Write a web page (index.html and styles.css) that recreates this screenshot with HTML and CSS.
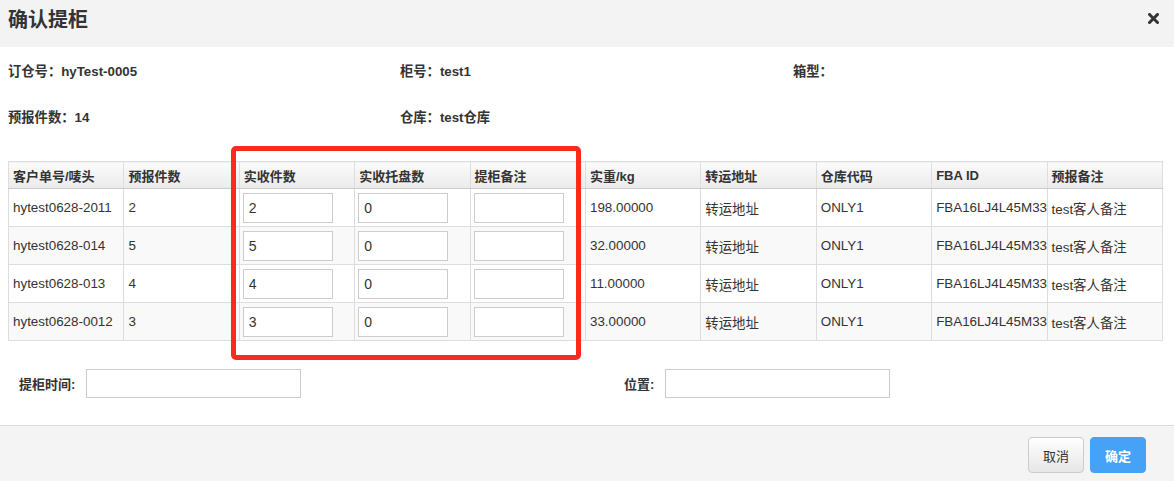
FILE: index.html
```html
<!DOCTYPE html>
<html lang="zh-CN">
<head>
<meta charset="utf-8">
<title>确认提柜</title>
<link rel="stylesheet" href="styles.css">
</head>
<body>
<div class="dialog">
  <div class="dlg-head">
    <h3 class="dlg-title">确认提柜</h3>
    <span class="dlg-close" aria-label="关闭">
      <svg width="11" height="11" viewBox="0 0 11 11"><path d="M1.5 1.5 L9.5 9.5 M9.5 1.5 L1.5 9.5" stroke="#333" stroke-width="3" stroke-linecap="square"/></svg>
    </span>
  </div>

  <div class="info">
    <div class="info-item">订仓号：hyTest-0005</div>
    <div class="info-item">柜号：test1</div>
    <div class="info-item">箱型：</div>
    <div class="info-item">预报件数：14</div>
    <div class="info-item">仓库：test仓库</div>
    <div class="info-item"></div>
  </div>

  <table class="grid">
    <thead>
      <tr>
        <th>客户单号/唛头</th>
        <th>预报件数</th>
        <th>实收件数</th>
        <th>实收托盘数</th>
        <th>提柜备注</th>
        <th>实重/kg</th>
        <th>转运地址</th>
        <th>仓库代码</th>
        <th>FBA ID</th>
        <th>预报备注</th>
      </tr>
    </thead>
    <tbody>
      <tr>
        <td>hytest0628-2011</td><td>2</td>
        <td><input class="cell-input" value="2"></td>
        <td><input class="cell-input" value="0"></td>
        <td><input class="cell-input" value=""></td>
        <td>198.00000</td><td>转运地址</td><td>ONLY1</td><td>FBA16LJ4L45M33</td><td>test客人备注</td>
      </tr>
      <tr>
        <td>hytest0628-014</td><td>5</td>
        <td><input class="cell-input" value="5"></td>
        <td><input class="cell-input" value="0"></td>
        <td><input class="cell-input" value=""></td>
        <td>32.00000</td><td>转运地址</td><td>ONLY1</td><td>FBA16LJ4L45M33</td><td>test客人备注</td>
      </tr>
      <tr>
        <td>hytest0628-013</td><td>4</td>
        <td><input class="cell-input" value="4"></td>
        <td><input class="cell-input" value="0"></td>
        <td><input class="cell-input" value=""></td>
        <td>11.00000</td><td>转运地址</td><td>ONLY1</td><td>FBA16LJ4L45M33</td><td>test客人备注</td>
      </tr>
      <tr>
        <td>hytest0628-0012</td><td>3</td>
        <td><input class="cell-input" value="3"></td>
        <td><input class="cell-input" value="0"></td>
        <td><input class="cell-input" value=""></td>
        <td>33.00000</td><td>转运地址</td><td>ONLY1</td><td>FBA16LJ4L45M33</td><td>test客人备注</td>
      </tr>
    </tbody>
  </table>

  <div class="form-row">
    <div class="form-group g1">
      <label class="form-label">提柜时间:</label>
      <input class="form-input w1">
    </div>
    <div class="form-group g2">
      <label class="form-label">位置:</label>
      <input class="form-input w2">
    </div>
  </div>

  <div class="dlg-foot">
    <button class="btn btn-default">取消</button>
    <button class="btn btn-primary">确定</button>
  </div>

  <div class="highlight"></div>
</div>
</body>
</html>
```

FILE: styles.css
```css
* { box-sizing: border-box; }
html, body { margin: 0; padding: 0; }
body {
  width: 1174px;
  height: 481px;
  overflow: hidden;
  background: #fff;
  color: #333;
  font-family: "Liberation Sans", "Noto Sans CJK SC", Arial, sans-serif;
  font-size: 13px;
}
.dialog { position: relative; width: 1174px; height: 481px; }

.dlg-head {
  height: 47px;
  background: #f3f3f3;
  display: flex;
  align-items: center;
  justify-content: space-between;
  padding: 0 15px 0 8px;
}
.dlg-title {
  margin: 0;
  font-size: 20px;
  font-weight: bold;
  line-height: 24px;
  color: #333;
  position: relative;
  top: -4px;
}
.dlg-close { display: flex; position: relative; top: -5px; }

.info {
  display: grid;
  grid-template-columns: 392px 393px 1fr;
  margin-top: 2px;
  padding-left: 8px;
}
.info-item {
  height: 46px;
  line-height: 46px;
  font-weight: bold;
  font-size: 13.3px;
}

.grid {
  margin: 20px 0 0 8px;
  width: 1155px;
  table-layout: fixed;
  border-collapse: collapse;
}
.grid th, .grid td {
  border: 1px solid #ddd;
  padding: 0 4px;
  text-align: left;
  white-space: nowrap;
  overflow: visible;
}
.grid th {
  height: 27px;
  font-weight: bold;
  font-size: 13px;
  background: linear-gradient(#fbfbfb, #ebebeb);
  border-bottom: 1px solid #ccc;
}
.grid td {
  height: 38px;
  font-size: 13.4px;
  color: #333;
}
.grid tbody tr:nth-child(even) td { background: #f9f9f9; }
.grid td:nth-child(3), .grid td:nth-child(4), .grid td:nth-child(5) { padding-left: 3px; }

.cell-input {
  display: block;
  width: 90px;
  height: 30px;
  border: 1px solid #ccc;
  background: #fff;
  padding: 0 5px;
  font-family: "Liberation Sans", "Noto Sans CJK SC", Arial, sans-serif;
  font-size: 14px;
  color: #333;
  outline: none;
}

.form-row {
  display: flex;
  margin-top: 28px;
  height: 29px;
}
.form-group { display: flex; align-items: center; }
.g1 { width: 578px; padding-left: 19px; }
.form-label {
  font-weight: bold;
  font-size: 13px;
  margin-right: 11px;
}
.g2 { padding-left: 46px; }
.form-input {
  height: 29px;
  border: 1px solid #ccc;
  background: #fff;
  outline: none;
}
.w1 { width: 215px; }
.w2 { width: 225px; }

.dlg-foot {
  position: absolute;
  left: 0; right: 0; bottom: 0;
  height: 56px;
  background: #f4f4f4;
  border-top: 1px solid #ddd;
  display: flex;
  justify-content: flex-end;
  align-items: flex-start;
  gap: 6px;
  padding: 11px 28px 0 0;
}
.btn {
  width: 56px;
  height: 36px;
  border-radius: 4px;
  font-family: "Liberation Sans", "Noto Sans CJK SC", Arial, sans-serif;
  font-size: 13px;
  cursor: pointer;
  padding: 0;
}
.btn-default {
  background: linear-gradient(#fff, #e6e6e6);
  border: 1px solid #ccc;
  color: #333;
}
.btn-primary {
  background: #46a2f6;
  border: 1px solid #46a2f6;
  color: #fff;
  font-weight: bold;
}

.highlight {
  position: absolute;
  left: 231px;
  top: 146px;
  width: 350px;
  height: 214px;
  border: 5px solid #fb2a1f;
  border-radius: 5px;
  pointer-events: none;
}
```
